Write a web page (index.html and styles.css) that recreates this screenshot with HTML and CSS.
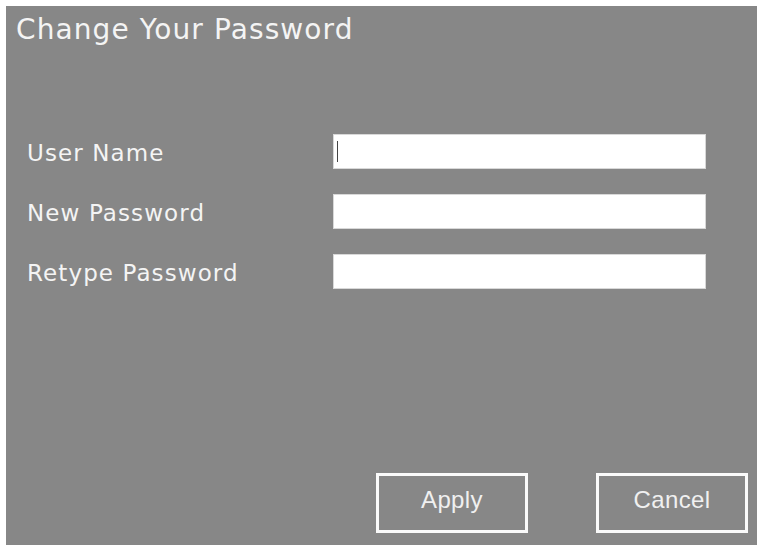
FILE: index.html
```html
<!DOCTYPE html>
<html lang="en">

<head>
  <meta charset="UTF-8">
  <meta name="viewport" content="width=device-width, initial-scale=1.0">
  <title>Change Your Password</title>
  <link rel="stylesheet" href="styles.css">
</head>

<body>
  <div class="dialog">
    <h1 class="dialog-title">Change Your Password</h1>

    <form class="password-form">
      <label for="userName">User Name</label>
      <div class="field"><input type="text" id="userName" /><span class="caret"></span></div>

      <label for="newPassword">New Password</label>
      <div class="field"><input type="password" id="newPassword" /></div>

      <label for="retypePassword">Retype Password</label>
      <div class="field"><input type="password" id="retypePassword" /></div>
    </form>

    <div class="actions">
      <button type="button">Apply</button>
      <button type="button">Cancel</button>
    </div>
  </div>
</body>

</html>
```

FILE: styles.css
```css
body {
  margin: 0;
  padding: 6px;
  background: #fff;
}

.dialog {
  display: flex;
  flex-direction: column;
  width: 751px;
  height: 539px;
  box-sizing: border-box;
  background: #878787;
  padding: 8px 9px 12px 10px;
  font-family: "DejaVu Sans", sans-serif;
  color: #f4f4f4;
}

.dialog-title {
  margin: 0;
  font-size: 28px;
  font-weight: normal;
  line-height: 31px;
  letter-spacing: 1.1px;
}

.password-form {
  display: grid;
  grid-template-columns: 306px 373px;
  row-gap: 25px;
  align-items: center;
  margin: 89px 0 0 11px;
}

.password-form label {
  font-size: 23px;
  letter-spacing: 1.1px;
  padding-top: 2px;
}

.field {
  position: relative;
}

.field input {
  display: block;
  width: 100%;
  height: 35px;
  box-sizing: border-box;
  border: 1px solid #d8d8d8;
  background: #fff;
  outline: none;
}

.caret {
  position: absolute;
  left: 4px;
  top: 7px;
  width: 1px;
  height: 21px;
  background: #444;
}

.actions {
  display: flex;
  justify-content: flex-end;
  gap: 68px;
  margin-top: auto;
}

.actions button {
  width: 152px;
  height: 60px;
  padding: 0 0 6px;
  background: #878787;
  border: 3px solid #fafafa;
  color: #f0f0f0;
  font-family: "Liberation Sans", Arial, sans-serif;
  font-size: 24px;
  letter-spacing: 0.4px;
}
```
